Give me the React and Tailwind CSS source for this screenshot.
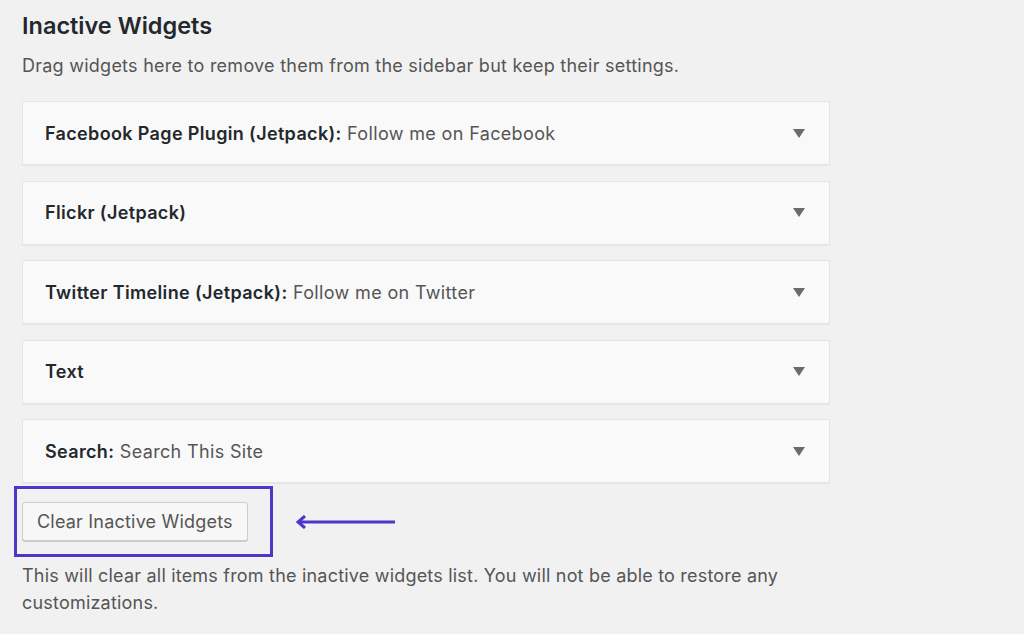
import { Fragment } from 'react';

const widgets = [
  { name: 'Facebook Page Plugin (Jetpack)', title: 'Follow me on Facebook' },
  { name: 'Flickr (Jetpack)' },
  { name: 'Twitter Timeline (Jetpack)', title: 'Follow me on Twitter' },
  { name: 'Text' },
  { name: 'Search', title: 'Search This Site' },
];

const WidgetRow = ({ name, title }) => (
  <div className="flex h-[64px] items-center justify-between border border-[#e5e5e5] bg-[#f9f9f9] pl-[22px] pr-[24px] shadow-[0_1px_1px_rgba(0,0,0,0.04)]">
    <h3 className="text-[18px] font-semibold tracking-[0.35px] text-[#23282d]">
      {name}
      {title && (
        <Fragment>
          :<span className="font-normal text-[#555]"> {title}</span>
        </Fragment>
      )}
    </h3>
    <svg width="12" height="9" viewBox="0 0 12 9" className="text-[#6b6b6b]">
      <path d="M0 0h12L6 9z" fill="currentColor" />
    </svg>
  </div>
);

export default function App() {
  return (
    <div
      className="min-h-[634px] w-[1024px] bg-[#f1f1f1] px-[22px] pt-[11px] text-[#444]"
      style={{ fontFamily: 'Inter, "Noto Sans", sans-serif' }}
    >
      <h2 className="text-[23.5px] font-semibold leading-[30px] text-[#23282d]">
        Inactive Widgets
      </h2>
      <p className="mt-[12px] text-[18px] leading-[26px] tracking-[0.25px] text-[#555]">
        Drag widgets here to remove them from the sidebar but keep their settings.
      </p>

      <div className="mt-[22px] flex w-[808px] flex-col gap-[15.5px]">
        {widgets.map((w) => (
          <WidgetRow key={w.name} {...w} />
        ))}
      </div>

      <div className="mt-[3px] flex items-center">
        <div className="-ml-[8px] border-[3px] border-[#4e36c9] py-[13px] pl-[5px] pr-[22px]">
          <button className="h-[39px] rounded-[3px] border border-[#ccc] bg-[#f7f7f7] px-[14px] text-[18px] tracking-[0.2px] text-[#555] shadow-[0_1px_0_#ccc]">
            Clear Inactive Widgets
          </button>
        </div>
        <svg width="102" height="14" viewBox="0 0 102 14" className="ml-[22px] text-[#4e36c9]">
          <path d="M100 7H4M10 1L3 7l7 6" fill="none" stroke="currentColor" strokeWidth="3" />
        </svg>
      </div>

      <p className="mt-[5px] w-[800px] text-[18px] leading-[27px] tracking-[0.2px] text-[#555]">
        This will clear all items from the inactive widgets list. You will not be able to restore any customizations.
      </p>
    </div>
  );
}
